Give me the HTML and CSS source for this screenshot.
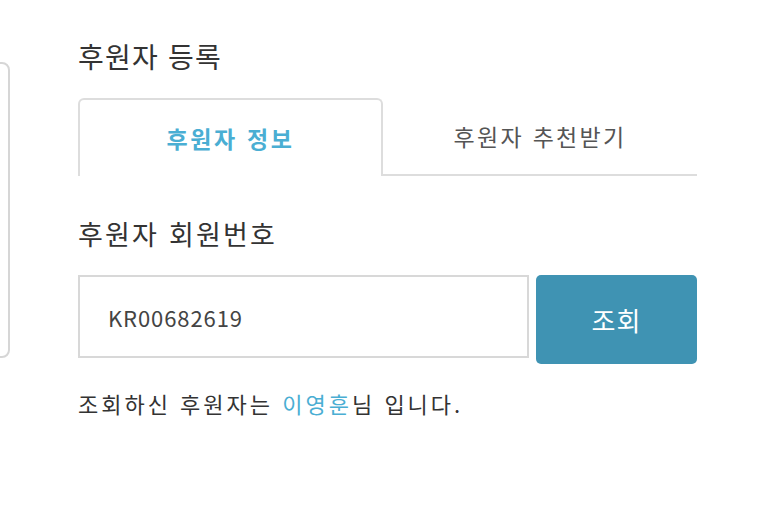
FILE: index.html
```html
<!DOCTYPE html>
<html lang="ko">
<head>
    <meta charset="UTF-8">
    <meta name="viewport" content="width=device-width, initial-scale=1.0">
    <title>후원자 등록</title>
    <link rel="stylesheet" href="styles.css">
</head>
<body>
    <div class="side-card"></div>
    <div class="content">
        <div class="title">후원자 등록</div>
        <div class="tabs">
            <div class="tab active">후원자 정보</div>
            <div class="tab">후원자 추천받기</div>
        </div>
        <div class="label">후원자 회원번호</div>
        <div class="search-row">
            <div class="input-box">KR00682619</div>
            <button class="search-btn">조회</button>
        </div>
        <div class="result">조회하신 후원자는 <span class="name">이영훈</span>님 입니다.</div>
    </div>
</body>
</html>
```

FILE: styles.css
```css
body, html {
    margin: 0;
    padding: 0;
    width: 100%;
    height: 100%;
    background: #fff;
    overflow: hidden;
    font-family: "Noto Sans CJK KR", "Noto Sans", sans-serif;
}

body {
    position: relative;
}

.side-card {
    position: absolute;
    left: -30px;
    top: 62px;
    width: 36px;
    height: 292px;
    border: 2px solid #d6d6d6;
    border-radius: 8px;
}

.content {
    width: 619px;
    margin-left: 78px;
    padding-top: 32px;
}

.title {
    font-size: 28px;
    letter-spacing: 1.2px;
    color: #333;
    line-height: 48px;
}

.tabs {
    display: flex;
    margin-top: 18px;
    height: 78px;
}

.tab {
    flex: 1;
    display: flex;
    justify-content: center;
    align-items: center;
    font-size: 23px;
    letter-spacing: 2.3px;
    color: #555;
    border-bottom: 2px solid #ddd;
    box-sizing: border-box;
}

.tab.active {
    flex: 0 0 305px;
    color: #4aaed3;
    font-weight: bold;
    letter-spacing: 2.6px;
    border: 2px solid #ddd;
    border-bottom: none;
    border-radius: 6px 6px 0 0;
}

.label {
    font-size: 27px;
    letter-spacing: 2.2px;
    color: #333;
    margin-top: 36px;
    line-height: 44px;
}

.search-row {
    display: flex;
    align-items: flex-start;
    gap: 7px;
    margin-top: 19px;
}

.input-box {
    width: 451px;
    height: 83px;
    box-sizing: border-box;
    border: 2px solid #d8d8d8;
    padding-left: 28px;
    display: flex;
    align-items: center;
    font-size: 22px;
    letter-spacing: 0.9px;
    color: #444;
}

.search-btn {
    width: 161px;
    height: 89px;
    border: none;
    border-radius: 5px;
    background: #3f93b3;
    color: #fff;
    font-family: inherit;
    font-size: 26px;
    letter-spacing: 1px;
}

.result {
    font-size: 22px;
    letter-spacing: 3px;
    color: #333;
    margin-top: 23px;
}

.result .name {
    color: #4aaed3;
}
```
